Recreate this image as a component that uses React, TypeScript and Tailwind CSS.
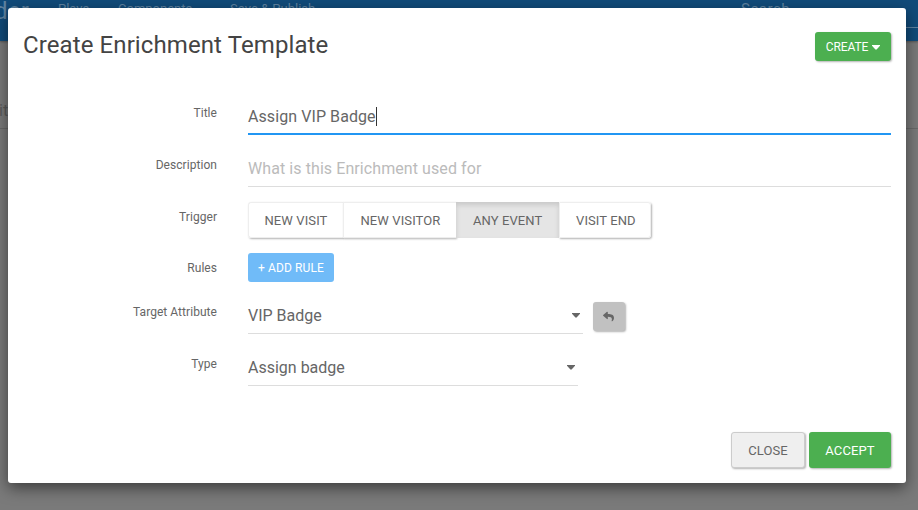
import type { ReactNode } from "react";
import { FaReply } from "react-icons/fa";

const raised = "shadow-[1px_1px_2px_rgba(0,0,0,0.3)]";

function Row({ label, children }: { label: string; children: ReactNode }) {
  return (
    <div className="flex">
      <div className="w-[209px] shrink-0 pt-[6px] text-right text-[12px] leading-[18px] tracking-[0.05px]">{label}</div>
      <div className="ml-[31px] flex-1">{children}</div>
    </div>
  );
}

function Caret({ className = "" }: { className?: string }) {
  return (
    <svg width="8" height="5" viewBox="0 0 8 5" className={className}>
      <path d="M0 0h8v.8L4.6 4.6h-1.2L0 .8z" fill="currentColor" />
    </svg>
  );
}

function Page() {
  return (
    <div className="h-full bg-[#7a7a7a]">
      <div className="flex h-[41px] bg-[#114b7a] text-[13px] leading-[18px] text-[#5f83a1] shadow-[0_1px_2px_rgba(0,0,0,0.3)]">
        <div className="-mt-[4px] w-[58px] whitespace-nowrap text-[24px] leading-[30px] tracking-[0.3px]">
          <span className="-ml-[6px]">der</span>
        </div>
        <div className="w-[60px]">Plays</div>
        <div className="w-[112px]">Components</div>
        <div className="w-[511px]">Save &amp; Publish</div>
        <div className="h-[28px] flex-1 border-b border-[#5f83a1] text-[15px] leading-[19px] tracking-[0.5px]">Search</div>
      </div>
      <div className="h-[88px] border-b border-[#696969] pt-[59px] text-[16px] leading-[22px] text-[#5a5a5a]">
        <span className="-ml-px">it</span>
      </div>
    </div>
  );
}

export default function App() {
  return (
    <div className="relative h-[510px] w-[918px] overflow-hidden font-[Roboto,sans-serif] text-[#666]">
      <Page />
      <div className="absolute left-[8px] top-[8px] flex h-[475px] w-[898px] flex-col rounded-[3px] bg-white shadow-[0_5px_15px_rgba(0,0,0,0.5)]">
        <div className="flex items-start justify-between pl-[15px] pr-[15px] pt-[24px]">
          <h4 className="pt-[1px] text-[24px] leading-[25px] tracking-[0.1px] text-[#444]">Create Enrichment Template</h4>
          <button className={`flex h-[29px] w-[76px] items-center justify-center rounded-[3px] bg-[#4caf50] text-[12px] tracking-[-0.1px] text-white ${raised}`}>
            CREATE
            <Caret className="ml-[4px] mt-[2px]" />
          </button>
        </div>

        <div className="mt-[37px] flex flex-col gap-[15px] pr-[15px]">
          <Row label="Title">
            <div className="flex h-[37px] items-center border-b-2 border-[#2196f3] pt-[2px] text-[16px] tracking-[0.08px]">
              Assign VIP Badge
              <span className="h-[19px] w-px bg-[#333]" />
            </div>
          </Row>
          <Row label="Description">
            <div className="flex h-[37px] items-center border-b border-[#ddd] pt-[2px] text-[16px] tracking-[0.08px] text-[#bbb]">
              What is this Enrichment used for
            </div>
          </Row>
          <Row label="Trigger">
            <div className="flex h-[36px] text-[13px] tracking-[0.1px]">
              <button className={`w-[95px] rounded-l-[3px] border border-r-0 border-[#eee] pl-[15.5px] pt-[1px] text-left ${raised}`}>NEW VISIT</button>
              <button className={`w-[113px] border border-r-0 border-[#eee] bg-white pl-[16.5px] pt-[1px] text-left ${raised}`}>NEW VISITOR</button>
              <button className="z-10 w-[103px] bg-[#e5e5e5] pl-[17px] pt-[1px] text-left shadow-[inset_0_3px_5px_rgba(0,0,0,0.125)]">ANY EVENT</button>
              <button className={`w-[92px] rounded-r-[3px] border border-[#eee] pl-[16px] pt-[1px] text-left ${raised}`}>VISIT END</button>
            </div>
          </Row>
          <Row label="Rules">
            <button className="flex h-[29px] w-[86px] items-center justify-center rounded-[3px] bg-[#70bbf8] text-[12px] tracking-[0.1px] text-white">
              + ADD RULE
            </button>
          </Row>
          <Row label="Target Attribute">
            <div className="flex">
              <div className="flex h-[37px] w-[335px] items-center justify-between border-b border-[#ddd] pr-[3px] text-[16px]">
                <span className="pt-[2px]">VIP Badge</span>
                <Caret />
              </div>
              <button className={`ml-[10px] mt-[5px] flex h-[29px] w-[31.5px] items-center justify-center rounded-[3px] bg-[#c1c1c1] ${raised}`}>
                <FaReply size={11} color="#666" />
              </button>
            </div>
          </Row>
          <Row label="Type">
            <div className="flex h-[37px] w-[330px] items-center justify-between border-b border-[#ddd] pr-[3px] text-[16px]">
              <span className="pt-[2px]">Assign badge</span>
              <Caret />
            </div>
          </Row>
        </div>

        <div className="mt-auto flex justify-end gap-[4px] pb-[15px] pr-[15px] text-[13px] tracking-[0.1px]">
          <button className={`h-[36px] w-[74px] rounded-[3px] border border-[#ccc] bg-[#efefef] pt-[1px] ${raised}`}>CLOSE</button>
          <button className={`h-[36px] w-[82px] rounded-[3px] bg-[#4caf50] pt-[1px] text-white ${raised}`}>ACCEPT</button>
        </div>
      </div>
    </div>
  );
}
